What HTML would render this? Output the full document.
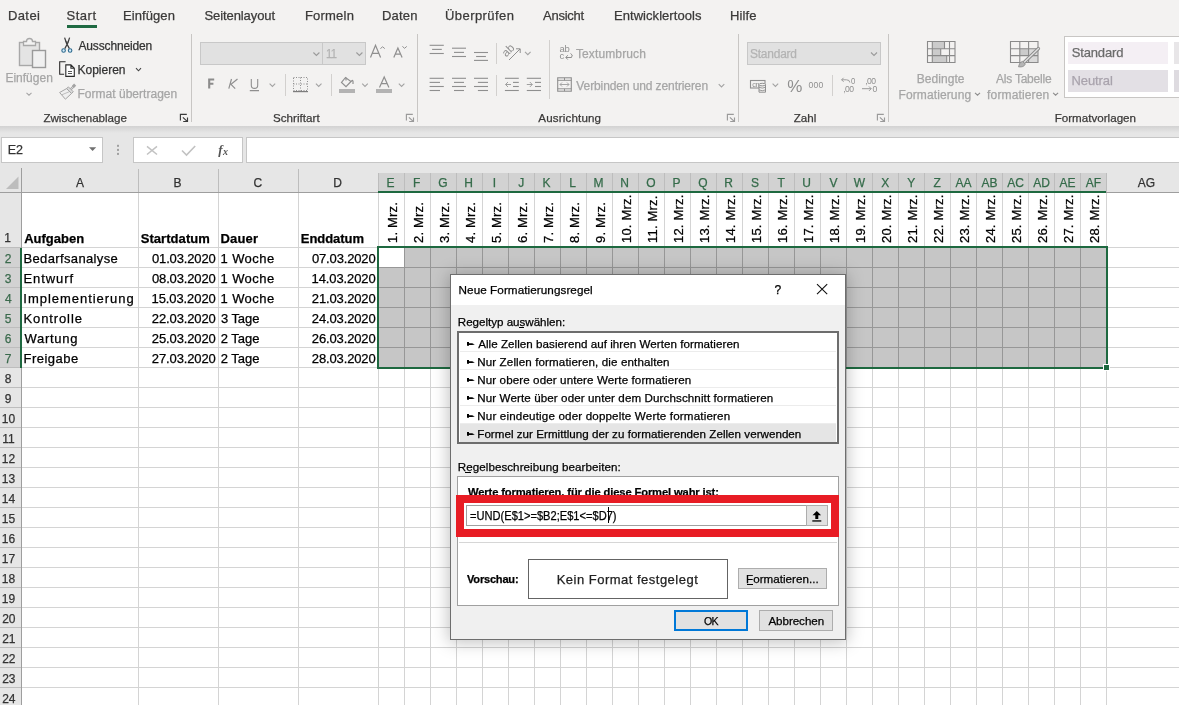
<!DOCTYPE html><html><head><meta charset="utf-8"><style>
html,body{margin:0;padding:0}
body{width:1179px;height:705px;overflow:hidden;position:relative;background:#fff;font-family:"Liberation Sans",sans-serif}
.t{position:absolute;white-space:pre;-webkit-text-stroke:0.25px currentColor}
#wrap{position:absolute;left:0;top:0;width:1179px;height:705px;will-change:transform}
</style></head><body><div id="wrap">
<div style="position:absolute;left:0px;top:0px;width:1179px;height:126px;background:#f3f2f1"></div>
<div style="position:absolute;left:0px;top:128px;width:1179px;height:40px;background:#e6e6e6"></div>
<div style="position:absolute;left:0px;top:126px;width:1179px;height:7px;background:linear-gradient(#d2d2d2,#e6e6e6)"></div>
<div class="t " style="left:7.96px;top:8.70px;font-size:13px;line-height:13px;color:#3b3a39;letter-spacing:0.399px;">Datei</div>
<div class="t " style="left:66.42px;top:8.70px;font-size:13px;line-height:13px;color:#3b3a39;letter-spacing:0.555px;">Start</div>
<div class="t " style="left:122.96px;top:8.70px;font-size:13px;line-height:13px;color:#3b3a39;letter-spacing:0.086px;">Einfügen</div>
<div class="t " style="left:204.41px;top:8.70px;font-size:13px;line-height:13px;color:#3b3a39;letter-spacing:-0.077px;">Seitenlayout</div>
<div class="t " style="left:304.96px;top:8.70px;font-size:13px;line-height:13px;color:#3b3a39;letter-spacing:0.207px;">Formeln</div>
<div class="t " style="left:381.96px;top:8.70px;font-size:13px;line-height:13px;color:#3b3a39;letter-spacing:0.185px;">Daten</div>
<div class="t " style="left:445.02px;top:8.70px;font-size:13px;line-height:13px;color:#3b3a39;letter-spacing:0.424px;">Überprüfen</div>
<div class="t " style="left:543.00px;top:8.70px;font-size:13px;line-height:13px;color:#3b3a39;letter-spacing:-0.252px;">Ansicht</div>
<div class="t " style="left:613.96px;top:8.70px;font-size:13px;line-height:13px;color:#3b3a39;letter-spacing:0.056px;">Entwicklertools</div>
<div class="t " style="left:729.96px;top:8.70px;font-size:13px;line-height:13px;color:#3b3a39;letter-spacing:0.156px;">Hilfe</div>
<div style="position:absolute;left:67px;top:25px;width:30px;height:3px;background:#1f6a42"></div>
<div class="t " style="left:43.45px;top:112.08px;font-size:11.6px;line-height:11.6px;color:#3b3a39;letter-spacing:-0.026px;">Zwischenablage</div>
<div class="t " style="left:272.98px;top:112.08px;font-size:11.6px;line-height:11.6px;color:#3b3a39;letter-spacing:0.042px;">Schriftart</div>
<div class="t " style="left:538.30px;top:112.08px;font-size:11.6px;line-height:11.6px;color:#3b3a39;letter-spacing:0.151px;">Ausrichtung</div>
<div class="t " style="left:793.65px;top:112.08px;font-size:11.6px;line-height:11.6px;color:#3b3a39;letter-spacing:0.047px;">Zahl</div>
<div class="t " style="left:1054.67px;top:112.08px;font-size:11.6px;line-height:11.6px;color:#3b3a39;letter-spacing:0.014px;">Formatvorlagen</div>
<div style="position:absolute;left:191px;top:34px;width:1px;height:88px;background:#c8c6c4"></div>
<div style="position:absolute;left:417px;top:34px;width:1px;height:88px;background:#c8c6c4"></div>
<div style="position:absolute;left:738px;top:34px;width:1px;height:88px;background:#c8c6c4"></div>
<div style="position:absolute;left:888px;top:34px;width:1px;height:88px;background:#c8c6c4"></div>
<div style="position:absolute;left:549px;top:40px;width:1px;height:59px;background:#d2d0ce"></div>
<div class="t " style="left:5.44px;top:72.44px;font-size:12px;line-height:12px;color:#a6a6a6;letter-spacing:0.000px;">Einfügen</div>
<div class="t " style="left:78.40px;top:40.24px;font-size:12px;line-height:12px;color:#333;letter-spacing:-0.135px;">Ausschneiden</div>
<div class="t " style="left:77.44px;top:64.04px;font-size:12px;line-height:12px;color:#333;letter-spacing:0.006px;">Kopieren</div>
<div class="t " style="left:77.44px;top:87.74px;font-size:12px;line-height:12px;color:#a6a6a6;letter-spacing:0.024px;">Format übertragen</div>
<div style="position:absolute;left:200px;top:42px;width:166px;height:23px;background:#e1e1e1;border:1px solid #c8c8c8;box-sizing:border-box"></div>
<div style="position:absolute;left:322px;top:42px;width:1px;height:23px;background:#c8c8c8"></div>
<div class="t " style="left:325.86px;top:47.92px;font-size:12.5px;line-height:12.5px;color:#b3b3b3;letter-spacing:-0.818px;transform-origin:0 0;transform:scaleX(0.8946);">11</div>
<div class="t " style="left:575.96px;top:47.84px;font-size:12px;line-height:12px;color:#a6a6a6;letter-spacing:0.122px;">Textumbruch</div>
<div class="t " style="left:576.34px;top:79.54px;font-size:12px;line-height:12px;color:#a6a6a6;letter-spacing:-0.103px;">Verbinden und zentrieren</div>
<div style="position:absolute;left:747px;top:42px;width:134px;height:23px;background:#e1e1e1;border:1px solid #c8c8c8;box-sizing:border-box"></div>
<div class="t " style="left:750.06px;top:47.72px;font-size:12.5px;line-height:12.5px;color:#b3b3b3;letter-spacing:-0.215px;transform-origin:0 0;transform:scaleX(0.9547);">Standard</div>
<div class="t " style="left:916.64px;top:72.54px;font-size:12px;line-height:12px;color:#a6a6a6;letter-spacing:0.066px;">Bedingte</div>
<div class="t " style="left:898.54px;top:88.54px;font-size:12px;line-height:12px;color:#a6a6a6;letter-spacing:0.109px;">Formatierung</div>
<div class="t " style="left:996.00px;top:72.54px;font-size:12px;line-height:12px;color:#a6a6a6;letter-spacing:-0.224px;">Als Tabelle</div>
<div class="t " style="left:987.12px;top:88.54px;font-size:12px;line-height:12px;color:#a6a6a6;letter-spacing:0.140px;">formatieren</div>
<div style="position:absolute;left:1064px;top:36px;width:120px;height:62px;background:#fff;border:1px solid #c8c6c4;box-sizing:border-box"></div>
<div style="position:absolute;left:1068px;top:42px;width:100px;height:22px;background:#f4eff4"></div>
<div style="position:absolute;left:1068px;top:70px;width:100px;height:22px;background:#e3e0e5"></div>
<div style="position:absolute;left:1174px;top:42px;width:10px;height:22px;background:#e8e6e8"></div>
<div style="position:absolute;left:1174px;top:70px;width:10px;height:22px;background:#dedbe0"></div>
<div class="t " style="left:1071.71px;top:46.00px;font-size:13px;line-height:13px;color:#6b6b6b;letter-spacing:-0.150px;">Standard</div>
<div class="t " style="left:1071.46px;top:73.60px;font-size:13px;line-height:13px;color:#a9a3ad;letter-spacing:-0.079px;">Neutral</div>
<div style="position:absolute;left:285px;top:74px;width:1px;height:22px;background:#d2d0ce"></div>
<div style="position:absolute;left:331px;top:74px;width:1px;height:22px;background:#d2d0ce"></div>
<div style="position:absolute;left:339px;top:88.5px;width:16px;height:4px;background:#b3b3b3"></div>
<div style="position:absolute;left:376px;top:88.5px;width:16px;height:4px;background:#b3b3b3"></div>
<div style="position:absolute;left:496px;top:43px;width:1px;height:21px;background:#d2d0ce"></div>
<div style="position:absolute;left:496px;top:75px;width:1px;height:21px;background:#d2d0ce"></div>
<div style="position:absolute;left:832px;top:75px;width:1px;height:21px;background:#d2d0ce"></div>
<svg style="position:absolute;left:0;top:0" width="1179" height="130"><rect x="19.5" y="42.5" width="20" height="23" fill="#e4e4e4" stroke="#a8a8a8" stroke-width="1.4"/><path d="M23.5,41.5 h3 a3,3 0 0 1 6,0 h3 v4 h-12 z" fill="#f2f2f2" stroke="#a8a8a8" stroke-width="1.3"/><rect x="32.5" y="50.5" width="13" height="17" fill="#f0f0f0" stroke="#9a9a9a" stroke-width="1.4"/><polyline points="26.5,92.8 29.0,95.2 31.5,92.8" fill="none" stroke="#a6a6a6" stroke-width="1.1"/><path d="M64.6,37.6 L66.4,43 L69.4,48.6 M69.6,37.6 L67.8,43 L64.8,48.6" stroke="#3f3f3f" stroke-width="1.25" fill="none"/><path d="M65.6,40.5 L67.2,44.2 L68.6,40.5" stroke="#3f3f3f" stroke-width="1" fill="none"/><circle cx="63.6" cy="50.5" r="1.75" fill="#d6eefb" stroke="#2f6b8f" stroke-width="1.15"/><circle cx="70.1" cy="50.5" r="1.75" fill="#d6eefb" stroke="#2f6b8f" stroke-width="1.15"/><path d="M65.6,61.7 h-5.9 v12.6 h4.4" fill="none" stroke="#2a2a2a" stroke-width="1.1"/><path d="M65.8,64.9 h5.1 l3.4,3.4 v8.1 h-8.5 z M70.9,64.9 v3.4 h3.4" fill="#fff" stroke="#2a2a2a" stroke-width="1.1"/><path d="M68,71.5 h4 M68,73.5 h4" stroke="#444" stroke-width="0.9"/><polyline points="136.0,68.2 138.5,70.8 141.0,68.2" fill="none" stroke="#444" stroke-width="1.1"/><path d="M66.6,88.6 L59.6,92.5 L65.4,99.2 L71.6,93.4 Z" fill="#efefef" stroke="#a3a3a3" stroke-width="1"/><path d="M61.8,94.8 L69.8,91.5" stroke="#b8b8b8" stroke-width="0.9"/><path d="M66.6,88.6 L68.4,86.9 L73.3,91.8 L71.6,93.4 Z" fill="#dcdcdc" stroke="#a3a3a3" stroke-width="1"/><path d="M70.8,89.2 L73.6,86.4" stroke="#a3a3a3" stroke-width="2.2"/><path d="M70.8,89.2 L73.2,86.8" stroke="#e8e8e8" stroke-width="0.7"/><rect x="72.6" y="84.2" width="3" height="3" fill="#a3a3a3" transform="rotate(45 74.1 85.7)"/><path d="M180.4,120.5 V114.3 H186.8 M182.9,117.3 L187.2,121.4 M187.5,117.5 V121.5 H183.2" fill="none" stroke="#3a3a3a" stroke-width="1.15"/><polyline points="313.4,52.5 316.4,55.5 319.4,52.5" fill="none" stroke="#9a9a9a" stroke-width="1.1"/><polyline points="356.4,52.5 359.4,55.5 362.4,52.5" fill="none" stroke="#9a9a9a" stroke-width="1.1"/><path d="M370.5,57.6 L375.5,45.3 L380.6,57.6 M372.3,53.3 H378.8" fill="none" stroke="#8f8f8f" stroke-width="1.2"/><polyline points="380.4,48.6 382.6,46.8 384.8,48.6" fill="none" stroke="#8f8f8f" stroke-width="1"/><path d="M393.8,57.6 L397.9,48 L402.1,57.6 M395.3,54.2 H400.6" fill="none" stroke="#8f8f8f" stroke-width="1.2"/><polyline points="402.4,46.4 404.6,48.3 406.8,46.4" fill="none" stroke="#8f8f8f" stroke-width="1"/><path d="M209.2,88.6 V79.5 H214.2 M209.2,83.8 H213.4" fill="none" stroke="#8c8c8c" stroke-width="2.1"/><path d="M231.5,79 L228.8,88.6 M237.5,79 L231,84.3 L235.2,88.6" fill="none" stroke="#8f8f8f" stroke-width="1.2"/><path d="M251.3,79 V85.2 a3.2,3.2 0 0 0 6.4,0 V79 M249.8,90.6 H259" fill="none" stroke="#8f8f8f" stroke-width="1.1"/><polyline points="269.6,83.6 272.4,86.4 275.2,83.6" fill="none" stroke="#a3a3a3" stroke-width="1.1"/><rect x="293.5" y="77.5" width="14" height="13" fill="none" stroke="#8f8f8f" stroke-width="1" stroke-dasharray="1,1.5"/><path d="M300.5,77.5 V90.5 M293.5,84 H307.5" fill="none" stroke="#8f8f8f" stroke-width="1" stroke-dasharray="1,1.5"/><path d="M293,91.6 H308" stroke="#7d7d7d" stroke-width="1.2"/><polyline points="315.9,83.6 318.7,86.4 321.5,83.6" fill="none" stroke="#a3a3a3" stroke-width="1.1"/><path d="M345.5,77.5 L341.5,82.5 L346,86.7 L351,81.5 Z" fill="none" stroke="#8f8f8f" stroke-width="1.2"/><path d="M346,77.5 v3 M351,81.5 q2.5,-3 2,2.5" fill="none" stroke="#8f8f8f" stroke-width="1.2"/><polyline points="362.2,83.6 365.0,86.4 367.8,83.6" fill="none" stroke="#a3a3a3" stroke-width="1.1"/><path d="M379.5,87.4 L384.2,77 L388.9,87.4 M381.3,83.6 H387.1" fill="none" stroke="#8f8f8f" stroke-width="1.2"/><polyline points="398.8,83.6 401.6,86.4 404.4,83.6" fill="none" stroke="#a3a3a3" stroke-width="1.1"/><path d="M406.4,120.5 V114.3 H412.8 M408.9,117.3 L413.2,121.4 M413.5,117.5 V121.5 H409.2" fill="none" stroke="#9a9a9a" stroke-width="1.15"/><path d="M429.6,45.3 H443.8" stroke="#8f8f8f" stroke-width="1.1"/><path d="M429.6,53.5 H443.8" stroke="#8f8f8f" stroke-width="1.1"/><path d="M432.1,49.4 H441.8" stroke="#8f8f8f" stroke-width="1.1"/><path d="M452.0,48.2 H466.0" stroke="#8f8f8f" stroke-width="1.1"/><path d="M452.0,56.5 H466.0" stroke="#8f8f8f" stroke-width="1.1"/><path d="M454.0,52.4 H464.0" stroke="#8f8f8f" stroke-width="1.1"/><path d="M474.0,52.5 H488.0" stroke="#8f8f8f" stroke-width="1.1"/><path d="M474.0,60.4 H488.0" stroke="#8f8f8f" stroke-width="1.1"/><path d="M476.1,56.5 H485.9" stroke="#8f8f8f" stroke-width="1.1"/><text x="0" y="0" transform="translate(506.3,57.6) rotate(-45)" font-family="Liberation Sans" font-size="11.5" fill="#8f8f8f">ab</text><path d="M509,60 L520,49 M516,48.8 H520.2 V53" fill="none" stroke="#8f8f8f" stroke-width="1"/><polyline points="525.0,51.9 527.8,54.7 530.6,51.9" fill="none" stroke="#a3a3a3" stroke-width="1.1"/><path d="M429.6,78.3 H443.8" stroke="#8f8f8f" stroke-width="1.1"/><path d="M452.0,78.3 H466.0" stroke="#8f8f8f" stroke-width="1.1"/><path d="M474.0,78.3 H488.0" stroke="#8f8f8f" stroke-width="1.1"/><path d="M429.6,86.5 H443.8" stroke="#8f8f8f" stroke-width="1.1"/><path d="M452.0,86.5 H466.0" stroke="#8f8f8f" stroke-width="1.1"/><path d="M474.0,86.5 H488.0" stroke="#8f8f8f" stroke-width="1.1"/><path d="M429.6,82.4 H440.0" stroke="#8f8f8f" stroke-width="1.1"/><path d="M454.0,82.4 H464.0" stroke="#8f8f8f" stroke-width="1.1"/><path d="M477.9,82.4 H488.0" stroke="#8f8f8f" stroke-width="1.1"/><path d="M429.6,90.5 H440.0" stroke="#8f8f8f" stroke-width="1.1"/><path d="M454.0,90.5 H464.0" stroke="#8f8f8f" stroke-width="1.1"/><path d="M477.9,90.5 H488.0" stroke="#8f8f8f" stroke-width="1.1"/><path d="M504.9,78.3 H518.8" stroke="#8f8f8f" stroke-width="1.1"/><path d="M504.9,90.5 H518.8" stroke="#8f8f8f" stroke-width="1.1"/><path d="M513.0,82.4 H518.8" stroke="#8f8f8f" stroke-width="1.1"/><path d="M513.0,86.5 H518.8" stroke="#8f8f8f" stroke-width="1.1"/><path d="M511,84.5 H505.5 M508,82 L505.5,84.5 L508,87" fill="none" stroke="#a0a0a0" stroke-width="1"/><path d="M526.8,78.3 H541.0" stroke="#8f8f8f" stroke-width="1.1"/><path d="M526.8,90.5 H541.0" stroke="#8f8f8f" stroke-width="1.1"/><path d="M535.0,82.4 H541.0" stroke="#8f8f8f" stroke-width="1.1"/><path d="M535.0,86.5 H541.0" stroke="#8f8f8f" stroke-width="1.1"/><path d="M526.8,84.5 H532.3 M529.8,82 L532.3,84.5 L529.8,87" fill="none" stroke="#a0a0a0" stroke-width="1"/><text x="559.6" y="52.2" font-family="Liberation Sans" font-size="9.5" fill="#8f8f8f" letter-spacing="-0.3">ab</text><text x="559.6" y="59.4" font-family="Liberation Sans" font-size="9.5" fill="#8f8f8f">c</text><path d="M570.5,53.5 q3,1 1,4 h-5.5 M567.8,55.2 L565.8,57.5 L567.8,59.6" fill="none" stroke="#8f8f8f" stroke-width="1"/><rect x="557.7" y="77.8" width="13.6" height="13.4" fill="none" stroke="#8f8f8f" stroke-width="1.1"/><path d="M557.7,80.3 H571.3 M557.7,88.8 H571.3 M564.5,77.8 V80.3 M564.5,88.8 V91.2" fill="none" stroke="#8f8f8f" stroke-width="1"/><path d="M560,84.5 H569 M562,82.5 L560,84.5 L562,86.5 M567,82.5 L569,84.5 L567,86.5" fill="none" stroke="#a6a6a6" stroke-width="1"/><polyline points="718.7,84.1 721.5,86.9 724.3,84.1" fill="none" stroke="#a3a3a3" stroke-width="1.1"/><path d="M727.4,120.5 V114.3 H733.8 M729.9,117.3 L734.2,121.4 M734.5,117.5 V121.5 H730.2" fill="none" stroke="#9a9a9a" stroke-width="1.15"/><polyline points="871.0,52.5 874.0,55.5 877.0,52.5" fill="none" stroke="#9a9a9a" stroke-width="1.1"/><rect x="750.5" y="80.5" width="14.5" height="7.5" fill="none" stroke="#8f8f8f" stroke-width="1.1"/><text x="752.3" y="86.9" font-family="Liberation Sans" font-size="7.5" fill="#8f8f8f" letter-spacing="-0.5">cn</text><path d="M759,84.6 h6.5 v7.6 h-6.5 z" fill="#f3f2f1" stroke="#8f8f8f" stroke-width="1"/><ellipse cx="762.25" cy="84.6" rx="3.25" ry="1.3" fill="#f3f2f1" stroke="#8f8f8f" stroke-width="1"/><path d="M759,87.3 q3.25,1.6 6.5,0 M759,89.9 q3.25,1.6 6.5,0" fill="none" stroke="#8f8f8f" stroke-width="0.9"/><polyline points="772.6,83.6 775.4,86.4 778.2,83.6" fill="none" stroke="#a3a3a3" stroke-width="1.1"/><text x="787.3" y="91.7" font-family="Liberation Sans" font-size="17" fill="#8f8f8f">%</text><text x="808.6" y="87.9" font-family="Liberation Sans" font-size="8.6" fill="#8f8f8f" letter-spacing="0.2">000</text><text x="851" y="84.2" font-family="Liberation Sans" font-size="8.6" fill="#8f8f8f" transform="translate(851,84.2) scale(0.9,1) translate(-851,-84.2)">0</text><text x="843.2" y="91.8" font-family="Liberation Sans" font-size="8.6" fill="#8f8f8f" letter-spacing="-0.6">,00</text><path d="M849.8,82.5 Q849.8,79.8 846.5,79.8 H841.6 M843.6,77.8 L841.6,79.8 L843.6,81.8" fill="none" stroke="#9a9a9a" stroke-width="1"/><text x="865.2" y="84.2" font-family="Liberation Sans" font-size="8.6" fill="#8f8f8f" letter-spacing="-0.6">,00</text><text x="872.5" y="91.8" font-family="Liberation Sans" font-size="8.6" fill="#8f8f8f">0</text><path d="M862,88.7 H871.2 M869,86.5 L871.2,88.7 L869,90.9" fill="none" stroke="#9a9a9a" stroke-width="1"/><path d="M877.4,120.5 V114.3 H883.8 M879.9,117.3 L884.2,121.4 M884.5,117.5 V121.5 H880.2" fill="none" stroke="#9a9a9a" stroke-width="1.15"/><rect x="932.3" y="41.5" width="12.2" height="7.2" fill="#cbcbcb"/><rect x="932.3" y="48.7" width="8.4" height="6.9" fill="#cbcbcb"/><rect x="932.3" y="55.6" width="14.4" height="6.9" fill="#cbcbcb"/><path d="M927.5,41.5 H955 V62.5 H927.5 Z M927.5,48.7 H955 M927.5,55.6 H955 M932.3,41.5 V62.5 M949.5,41.5 V62.5 M944.5,41.5 V48.7 M940.7,48.7 V55.6 M946.7,55.6 V62.5" fill="none" stroke="#8a8a8a" stroke-width="1.1"/><polyline points="975.0,92.8 977.5,95.2 980.0,92.8" fill="none" stroke="#8d8d8d" stroke-width="1.1"/><rect x="1019.8" y="48.7" width="8.8" height="6.9" fill="#cbcbcb"/><rect x="1028.6" y="48.7" width="9.4" height="13.8" fill="#dadada"/><path d="M1010.5,41.5 H1038 V62.5 H1010.5 Z M1010.5,48.7 H1038 M1010.5,55.6 H1038 M1019.8,41.5 V62.5 M1028.6,41.5 V62.5" fill="none" stroke="#8a8a8a" stroke-width="1.1"/><path d="M1038.5,48.5 L1024.5,62" stroke="#8a8a8a" stroke-width="3.2" stroke-linecap="round"/><path d="M1038.5,48.5 L1024.5,62" stroke="#e0e0e0" stroke-width="1.4" stroke-linecap="round"/><path d="M1018.5,66.8 q0.5,-4.5 4,-5.5 l2.8,2.8 q-1.5,3.5 -6.8,2.7 z" fill="#b5b5b5" stroke="#8a8a8a" stroke-width="0.8"/><polyline points="1053.1,92.8 1055.6,95.2 1058.1,92.8" fill="none" stroke="#8d8d8d" stroke-width="1.1"/></svg>
<div style="position:absolute;left:1px;top:137px;width:102px;height:26px;background:#fff;border:1px solid #c6c6c6;box-sizing:border-box"></div>
<div class="t " style="left:7.70px;top:144.32px;font-size:12.5px;line-height:12.5px;color:#333;">E2</div>
<div style="position:absolute;left:133px;top:137px;width:110px;height:26px;background:#fff;border:1px solid #c6c6c6;box-sizing:border-box"></div>
<div style="position:absolute;left:246px;top:137px;width:933px;height:26px;background:#fff;border:1px solid #c6c6c6;border-right:none;box-sizing:border-box"></div>
<div style="position:absolute;left:21px;top:193px;width:1158px;height:512px;background:#fff"></div>
<div style="position:absolute;left:0px;top:163px;width:1179px;height:30px;background:#e6e6e6"></div>
<div style="position:absolute;left:0px;top:193px;width:21px;height:512px;background:#e6e6e6"></div>
<div style="position:absolute;left:378px;top:173px;width:728px;height:19px;background:#d2d2d2"></div>
<div style="position:absolute;left:0px;top:248px;width:20px;height:120px;background:#d2d2d2"></div>
<div style="position:absolute;left:378px;top:247px;width:728px;height:121px;background:#c6c6c6"></div>
<div style="position:absolute;left:379px;top:248px;width:25px;height:19px;background:#fff"></div>
<div style="position:absolute;left:138px;top:193px;width:1px;height:512px;background:#d4d4d4"></div>
<div style="position:absolute;left:138px;top:169px;width:1px;height:23px;background:#bdbdbd"></div>
<div style="position:absolute;left:218px;top:193px;width:1px;height:512px;background:#d4d4d4"></div>
<div style="position:absolute;left:218px;top:169px;width:1px;height:23px;background:#bdbdbd"></div>
<div style="position:absolute;left:298px;top:193px;width:1px;height:512px;background:#d4d4d4"></div>
<div style="position:absolute;left:298px;top:169px;width:1px;height:23px;background:#bdbdbd"></div>
<div style="position:absolute;left:378px;top:193px;width:1px;height:512px;background:#d4d4d4"></div>
<div style="position:absolute;left:378px;top:173px;width:1px;height:20px;background:#bdbdbd"></div>
<div style="position:absolute;left:404px;top:193px;width:1px;height:512px;background:#d4d4d4"></div>
<div style="position:absolute;left:404px;top:173px;width:1px;height:20px;background:#bdbdbd"></div>
<div style="position:absolute;left:430px;top:193px;width:1px;height:512px;background:#d4d4d4"></div>
<div style="position:absolute;left:430px;top:173px;width:1px;height:20px;background:#bdbdbd"></div>
<div style="position:absolute;left:456px;top:193px;width:1px;height:512px;background:#d4d4d4"></div>
<div style="position:absolute;left:456px;top:173px;width:1px;height:20px;background:#bdbdbd"></div>
<div style="position:absolute;left:482px;top:193px;width:1px;height:512px;background:#d4d4d4"></div>
<div style="position:absolute;left:482px;top:173px;width:1px;height:20px;background:#bdbdbd"></div>
<div style="position:absolute;left:508px;top:193px;width:1px;height:512px;background:#d4d4d4"></div>
<div style="position:absolute;left:508px;top:173px;width:1px;height:20px;background:#bdbdbd"></div>
<div style="position:absolute;left:534px;top:193px;width:1px;height:512px;background:#d4d4d4"></div>
<div style="position:absolute;left:534px;top:173px;width:1px;height:20px;background:#bdbdbd"></div>
<div style="position:absolute;left:560px;top:193px;width:1px;height:512px;background:#d4d4d4"></div>
<div style="position:absolute;left:560px;top:173px;width:1px;height:20px;background:#bdbdbd"></div>
<div style="position:absolute;left:586px;top:193px;width:1px;height:512px;background:#d4d4d4"></div>
<div style="position:absolute;left:586px;top:173px;width:1px;height:20px;background:#bdbdbd"></div>
<div style="position:absolute;left:612px;top:193px;width:1px;height:512px;background:#d4d4d4"></div>
<div style="position:absolute;left:612px;top:173px;width:1px;height:20px;background:#bdbdbd"></div>
<div style="position:absolute;left:638px;top:193px;width:1px;height:512px;background:#d4d4d4"></div>
<div style="position:absolute;left:638px;top:173px;width:1px;height:20px;background:#bdbdbd"></div>
<div style="position:absolute;left:664px;top:193px;width:1px;height:512px;background:#d4d4d4"></div>
<div style="position:absolute;left:664px;top:173px;width:1px;height:20px;background:#bdbdbd"></div>
<div style="position:absolute;left:690px;top:193px;width:1px;height:512px;background:#d4d4d4"></div>
<div style="position:absolute;left:690px;top:173px;width:1px;height:20px;background:#bdbdbd"></div>
<div style="position:absolute;left:716px;top:193px;width:1px;height:512px;background:#d4d4d4"></div>
<div style="position:absolute;left:716px;top:173px;width:1px;height:20px;background:#bdbdbd"></div>
<div style="position:absolute;left:742px;top:193px;width:1px;height:512px;background:#d4d4d4"></div>
<div style="position:absolute;left:742px;top:173px;width:1px;height:20px;background:#bdbdbd"></div>
<div style="position:absolute;left:768px;top:193px;width:1px;height:512px;background:#d4d4d4"></div>
<div style="position:absolute;left:768px;top:173px;width:1px;height:20px;background:#bdbdbd"></div>
<div style="position:absolute;left:794px;top:193px;width:1px;height:512px;background:#d4d4d4"></div>
<div style="position:absolute;left:794px;top:173px;width:1px;height:20px;background:#bdbdbd"></div>
<div style="position:absolute;left:820px;top:193px;width:1px;height:512px;background:#d4d4d4"></div>
<div style="position:absolute;left:820px;top:173px;width:1px;height:20px;background:#bdbdbd"></div>
<div style="position:absolute;left:846px;top:193px;width:1px;height:512px;background:#d4d4d4"></div>
<div style="position:absolute;left:846px;top:173px;width:1px;height:20px;background:#bdbdbd"></div>
<div style="position:absolute;left:872px;top:193px;width:1px;height:512px;background:#d4d4d4"></div>
<div style="position:absolute;left:872px;top:173px;width:1px;height:20px;background:#bdbdbd"></div>
<div style="position:absolute;left:898px;top:193px;width:1px;height:512px;background:#d4d4d4"></div>
<div style="position:absolute;left:898px;top:173px;width:1px;height:20px;background:#bdbdbd"></div>
<div style="position:absolute;left:924px;top:193px;width:1px;height:512px;background:#d4d4d4"></div>
<div style="position:absolute;left:924px;top:173px;width:1px;height:20px;background:#bdbdbd"></div>
<div style="position:absolute;left:950px;top:193px;width:1px;height:512px;background:#d4d4d4"></div>
<div style="position:absolute;left:950px;top:173px;width:1px;height:20px;background:#bdbdbd"></div>
<div style="position:absolute;left:976px;top:193px;width:1px;height:512px;background:#d4d4d4"></div>
<div style="position:absolute;left:976px;top:173px;width:1px;height:20px;background:#bdbdbd"></div>
<div style="position:absolute;left:1002px;top:193px;width:1px;height:512px;background:#d4d4d4"></div>
<div style="position:absolute;left:1002px;top:173px;width:1px;height:20px;background:#bdbdbd"></div>
<div style="position:absolute;left:1028px;top:193px;width:1px;height:512px;background:#d4d4d4"></div>
<div style="position:absolute;left:1028px;top:173px;width:1px;height:20px;background:#bdbdbd"></div>
<div style="position:absolute;left:1054px;top:193px;width:1px;height:512px;background:#d4d4d4"></div>
<div style="position:absolute;left:1054px;top:173px;width:1px;height:20px;background:#bdbdbd"></div>
<div style="position:absolute;left:1080px;top:193px;width:1px;height:512px;background:#d4d4d4"></div>
<div style="position:absolute;left:1080px;top:173px;width:1px;height:20px;background:#bdbdbd"></div>
<div style="position:absolute;left:1106px;top:193px;width:1px;height:512px;background:#d4d4d4"></div>
<div style="position:absolute;left:1106px;top:173px;width:1px;height:20px;background:#bdbdbd"></div>
<div style="position:absolute;left:21px;top:247px;width:1158px;height:1px;background:#d4d4d4"></div>
<div style="position:absolute;left:0px;top:247px;width:21px;height:1px;background:#bdbdbd"></div>
<div style="position:absolute;left:21px;top:267px;width:1158px;height:1px;background:#d4d4d4"></div>
<div style="position:absolute;left:0px;top:267px;width:21px;height:1px;background:#bdbdbd"></div>
<div style="position:absolute;left:21px;top:287px;width:1158px;height:1px;background:#d4d4d4"></div>
<div style="position:absolute;left:0px;top:287px;width:21px;height:1px;background:#bdbdbd"></div>
<div style="position:absolute;left:21px;top:307px;width:1158px;height:1px;background:#d4d4d4"></div>
<div style="position:absolute;left:0px;top:307px;width:21px;height:1px;background:#bdbdbd"></div>
<div style="position:absolute;left:21px;top:327px;width:1158px;height:1px;background:#d4d4d4"></div>
<div style="position:absolute;left:0px;top:327px;width:21px;height:1px;background:#bdbdbd"></div>
<div style="position:absolute;left:21px;top:347px;width:1158px;height:1px;background:#d4d4d4"></div>
<div style="position:absolute;left:0px;top:347px;width:21px;height:1px;background:#bdbdbd"></div>
<div style="position:absolute;left:21px;top:367px;width:1158px;height:1px;background:#d4d4d4"></div>
<div style="position:absolute;left:0px;top:367px;width:21px;height:1px;background:#bdbdbd"></div>
<div style="position:absolute;left:21px;top:387px;width:1158px;height:1px;background:#d4d4d4"></div>
<div style="position:absolute;left:0px;top:387px;width:21px;height:1px;background:#bdbdbd"></div>
<div style="position:absolute;left:21px;top:407px;width:1158px;height:1px;background:#d4d4d4"></div>
<div style="position:absolute;left:0px;top:407px;width:21px;height:1px;background:#bdbdbd"></div>
<div style="position:absolute;left:21px;top:427px;width:1158px;height:1px;background:#d4d4d4"></div>
<div style="position:absolute;left:0px;top:427px;width:21px;height:1px;background:#bdbdbd"></div>
<div style="position:absolute;left:21px;top:447px;width:1158px;height:1px;background:#d4d4d4"></div>
<div style="position:absolute;left:0px;top:447px;width:21px;height:1px;background:#bdbdbd"></div>
<div style="position:absolute;left:21px;top:467px;width:1158px;height:1px;background:#d4d4d4"></div>
<div style="position:absolute;left:0px;top:467px;width:21px;height:1px;background:#bdbdbd"></div>
<div style="position:absolute;left:21px;top:487px;width:1158px;height:1px;background:#d4d4d4"></div>
<div style="position:absolute;left:0px;top:487px;width:21px;height:1px;background:#bdbdbd"></div>
<div style="position:absolute;left:21px;top:507px;width:1158px;height:1px;background:#d4d4d4"></div>
<div style="position:absolute;left:0px;top:507px;width:21px;height:1px;background:#bdbdbd"></div>
<div style="position:absolute;left:21px;top:527px;width:1158px;height:1px;background:#d4d4d4"></div>
<div style="position:absolute;left:0px;top:527px;width:21px;height:1px;background:#bdbdbd"></div>
<div style="position:absolute;left:21px;top:547px;width:1158px;height:1px;background:#d4d4d4"></div>
<div style="position:absolute;left:0px;top:547px;width:21px;height:1px;background:#bdbdbd"></div>
<div style="position:absolute;left:21px;top:567px;width:1158px;height:1px;background:#d4d4d4"></div>
<div style="position:absolute;left:0px;top:567px;width:21px;height:1px;background:#bdbdbd"></div>
<div style="position:absolute;left:21px;top:587px;width:1158px;height:1px;background:#d4d4d4"></div>
<div style="position:absolute;left:0px;top:587px;width:21px;height:1px;background:#bdbdbd"></div>
<div style="position:absolute;left:21px;top:607px;width:1158px;height:1px;background:#d4d4d4"></div>
<div style="position:absolute;left:0px;top:607px;width:21px;height:1px;background:#bdbdbd"></div>
<div style="position:absolute;left:21px;top:627px;width:1158px;height:1px;background:#d4d4d4"></div>
<div style="position:absolute;left:0px;top:627px;width:21px;height:1px;background:#bdbdbd"></div>
<div style="position:absolute;left:21px;top:647px;width:1158px;height:1px;background:#d4d4d4"></div>
<div style="position:absolute;left:0px;top:647px;width:21px;height:1px;background:#bdbdbd"></div>
<div style="position:absolute;left:21px;top:667px;width:1158px;height:1px;background:#d4d4d4"></div>
<div style="position:absolute;left:0px;top:667px;width:21px;height:1px;background:#bdbdbd"></div>
<div style="position:absolute;left:21px;top:687px;width:1158px;height:1px;background:#d4d4d4"></div>
<div style="position:absolute;left:0px;top:687px;width:21px;height:1px;background:#bdbdbd"></div>
<div style="position:absolute;left:404px;top:248px;width:1px;height:120px;background:#979797"></div>
<div style="position:absolute;left:430px;top:248px;width:1px;height:120px;background:#979797"></div>
<div style="position:absolute;left:456px;top:248px;width:1px;height:120px;background:#979797"></div>
<div style="position:absolute;left:482px;top:248px;width:1px;height:120px;background:#979797"></div>
<div style="position:absolute;left:508px;top:248px;width:1px;height:120px;background:#979797"></div>
<div style="position:absolute;left:534px;top:248px;width:1px;height:120px;background:#979797"></div>
<div style="position:absolute;left:560px;top:248px;width:1px;height:120px;background:#979797"></div>
<div style="position:absolute;left:586px;top:248px;width:1px;height:120px;background:#979797"></div>
<div style="position:absolute;left:612px;top:248px;width:1px;height:120px;background:#979797"></div>
<div style="position:absolute;left:638px;top:248px;width:1px;height:120px;background:#979797"></div>
<div style="position:absolute;left:664px;top:248px;width:1px;height:120px;background:#979797"></div>
<div style="position:absolute;left:690px;top:248px;width:1px;height:120px;background:#979797"></div>
<div style="position:absolute;left:716px;top:248px;width:1px;height:120px;background:#979797"></div>
<div style="position:absolute;left:742px;top:248px;width:1px;height:120px;background:#979797"></div>
<div style="position:absolute;left:768px;top:248px;width:1px;height:120px;background:#979797"></div>
<div style="position:absolute;left:794px;top:248px;width:1px;height:120px;background:#979797"></div>
<div style="position:absolute;left:820px;top:248px;width:1px;height:120px;background:#979797"></div>
<div style="position:absolute;left:846px;top:248px;width:1px;height:120px;background:#979797"></div>
<div style="position:absolute;left:872px;top:248px;width:1px;height:120px;background:#979797"></div>
<div style="position:absolute;left:898px;top:248px;width:1px;height:120px;background:#979797"></div>
<div style="position:absolute;left:924px;top:248px;width:1px;height:120px;background:#979797"></div>
<div style="position:absolute;left:950px;top:248px;width:1px;height:120px;background:#979797"></div>
<div style="position:absolute;left:976px;top:248px;width:1px;height:120px;background:#979797"></div>
<div style="position:absolute;left:1002px;top:248px;width:1px;height:120px;background:#979797"></div>
<div style="position:absolute;left:1028px;top:248px;width:1px;height:120px;background:#979797"></div>
<div style="position:absolute;left:1054px;top:248px;width:1px;height:120px;background:#979797"></div>
<div style="position:absolute;left:1080px;top:248px;width:1px;height:120px;background:#979797"></div>
<div style="position:absolute;left:379px;top:267px;width:727px;height:1px;background:#979797"></div>
<div style="position:absolute;left:379px;top:287px;width:727px;height:1px;background:#979797"></div>
<div style="position:absolute;left:379px;top:307px;width:727px;height:1px;background:#979797"></div>
<div style="position:absolute;left:379px;top:327px;width:727px;height:1px;background:#979797"></div>
<div style="position:absolute;left:379px;top:347px;width:727px;height:1px;background:#979797"></div>
<div style="position:absolute;left:0px;top:192px;width:1179px;height:1px;background:#9e9e9e"></div>
<div style="position:absolute;left:378px;top:191px;width:728px;height:2px;background:#1e6940"></div>
<div style="position:absolute;left:21px;top:168px;width:1px;height:537px;background:#9e9e9e"></div>
<div style="position:absolute;left:20px;top:248px;width:2px;height:120px;background:#1e6940"></div>
<svg style="position:absolute;left:6px;top:176px" width="13" height="13"><polygon points="12.5,0.5 12.5,13 0,13" fill="#bdbdbd"/></svg>
<div class="t " style="left:76.00px;top:176.84px;font-size:12px;line-height:12px;color:#333;">A</div>
<div class="t " style="left:173.54px;top:176.84px;font-size:12px;line-height:12px;color:#333;">B</div>
<div class="t " style="left:253.57px;top:176.84px;font-size:12px;line-height:12px;color:#333;">C</div>
<div class="t " style="left:333.21px;top:176.84px;font-size:12px;line-height:12px;color:#333;">D</div>
<div class="t " style="left:386.54px;top:176.84px;font-size:12px;line-height:12px;color:#356b4a;">E</div>
<div class="t " style="left:412.88px;top:176.84px;font-size:12px;line-height:12px;color:#356b4a;">F</div>
<div class="t " style="left:438.23px;top:176.84px;font-size:12px;line-height:12px;color:#356b4a;">G</div>
<div class="t " style="left:464.21px;top:176.84px;font-size:12px;line-height:12px;color:#356b4a;">H</div>
<div class="t " style="left:492.75px;top:176.84px;font-size:12px;line-height:12px;color:#356b4a;">I</div>
<div class="t " style="left:518.32px;top:176.84px;font-size:12px;line-height:12px;color:#356b4a;">J</div>
<div class="t " style="left:542.54px;top:176.84px;font-size:12px;line-height:12px;color:#356b4a;">K</div>
<div class="t " style="left:569.20px;top:176.84px;font-size:12px;line-height:12px;color:#356b4a;">L</div>
<div class="t " style="left:593.54px;top:176.84px;font-size:12px;line-height:12px;color:#356b4a;">M</div>
<div class="t " style="left:620.21px;top:176.84px;font-size:12px;line-height:12px;color:#356b4a;">N</div>
<div class="t " style="left:646.29px;top:176.84px;font-size:12px;line-height:12px;color:#356b4a;">O</div>
<div class="t " style="left:672.54px;top:176.84px;font-size:12px;line-height:12px;color:#356b4a;">P</div>
<div class="t " style="left:698.29px;top:176.84px;font-size:12px;line-height:12px;color:#356b4a;">Q</div>
<div class="t " style="left:724.21px;top:176.84px;font-size:12px;line-height:12px;color:#356b4a;">R</div>
<div class="t " style="left:750.96px;top:176.84px;font-size:12px;line-height:12px;color:#356b4a;">S</div>
<div class="t " style="left:777.60px;top:176.84px;font-size:12px;line-height:12px;color:#356b4a;">T</div>
<div class="t " style="left:802.27px;top:176.84px;font-size:12px;line-height:12px;color:#356b4a;">U</div>
<div class="t " style="left:829.44px;top:176.84px;font-size:12px;line-height:12px;color:#356b4a;">V</div>
<div class="t " style="left:853.78px;top:176.84px;font-size:12px;line-height:12px;color:#356b4a;">W</div>
<div class="t " style="left:881.20px;top:176.84px;font-size:12px;line-height:12px;color:#356b4a;">X</div>
<div class="t " style="left:907.20px;top:176.84px;font-size:12px;line-height:12px;color:#356b4a;">Y</div>
<div class="t " style="left:933.48px;top:176.84px;font-size:12px;line-height:12px;color:#356b4a;">Z</div>
<div class="t " style="left:955.50px;top:176.84px;font-size:12px;line-height:12px;color:#356b4a;">AA</div>
<div class="t " style="left:981.50px;top:176.84px;font-size:12px;line-height:12px;color:#356b4a;">AB</div>
<div class="t " style="left:1007.16px;top:176.84px;font-size:12px;line-height:12px;color:#356b4a;">AC</div>
<div class="t " style="left:1033.16px;top:176.84px;font-size:12px;line-height:12px;color:#356b4a;">AD</div>
<div class="t " style="left:1059.50px;top:176.84px;font-size:12px;line-height:12px;color:#356b4a;">AE</div>
<div class="t " style="left:1085.83px;top:176.84px;font-size:12px;line-height:12px;color:#356b4a;">AF</div>
<div class="t " style="left:1137.83px;top:176.84px;font-size:12px;line-height:12px;color:#333;">AG</div>
<div class="t " style="left:4.36px;top:232.34px;font-size:12px;line-height:12px;color:#333;">1</div>
<div class="t " style="left:4.66px;top:252.74px;font-size:12px;line-height:12px;color:#3b6a4d;">2</div>
<div class="t " style="left:4.78px;top:272.74px;font-size:12px;line-height:12px;color:#3b6a4d;">3</div>
<div class="t " style="left:5.02px;top:292.74px;font-size:12px;line-height:12px;color:#3b6a4d;">4</div>
<div class="t " style="left:4.78px;top:312.74px;font-size:12px;line-height:12px;color:#3b6a4d;">5</div>
<div class="t " style="left:4.66px;top:332.74px;font-size:12px;line-height:12px;color:#3b6a4d;">6</div>
<div class="t " style="left:4.66px;top:352.74px;font-size:12px;line-height:12px;color:#3b6a4d;">7</div>
<div class="t " style="left:4.72px;top:372.74px;font-size:12px;line-height:12px;color:#333;">8</div>
<div class="t " style="left:4.72px;top:392.74px;font-size:12px;line-height:12px;color:#333;">9</div>
<div class="t " style="left:1.83px;top:412.74px;font-size:12px;line-height:12px;color:#333;">10</div>
<div class="t " style="left:2.27px;top:432.74px;font-size:12px;line-height:12px;color:#333;">11</div>
<div class="t " style="left:1.83px;top:452.74px;font-size:12px;line-height:12px;color:#333;">12</div>
<div class="t " style="left:1.83px;top:472.74px;font-size:12px;line-height:12px;color:#333;">13</div>
<div class="t " style="left:1.83px;top:492.74px;font-size:12px;line-height:12px;color:#333;">14</div>
<div class="t " style="left:1.83px;top:512.74px;font-size:12px;line-height:12px;color:#333;">15</div>
<div class="t " style="left:1.83px;top:532.74px;font-size:12px;line-height:12px;color:#333;">16</div>
<div class="t " style="left:1.83px;top:552.74px;font-size:12px;line-height:12px;color:#333;">17</div>
<div class="t " style="left:1.83px;top:572.74px;font-size:12px;line-height:12px;color:#333;">18</div>
<div class="t " style="left:1.83px;top:592.74px;font-size:12px;line-height:12px;color:#333;">19</div>
<div class="t " style="left:2.13px;top:612.74px;font-size:12px;line-height:12px;color:#333;">20</div>
<div class="t " style="left:2.13px;top:632.74px;font-size:12px;line-height:12px;color:#333;">21</div>
<div class="t " style="left:2.13px;top:652.74px;font-size:12px;line-height:12px;color:#333;">22</div>
<div class="t " style="left:2.13px;top:672.74px;font-size:12px;line-height:12px;color:#333;">23</div>
<div class="t " style="left:2.13px;top:692.74px;font-size:12px;line-height:12px;color:#333;">24</div>
<div style="position:absolute;left:377px;top:246px;width:731px;height:123px;border:2px solid #1e6940;box-sizing:border-box"></div>
<div style="position:absolute;left:1103px;top:364px;width:5px;height:5px;background:#1e6940;border:1px solid #fff"></div>
<div class="t " style="left:24.18px;top:231.50px;font-size:13px;line-height:13px;color:#000;font-weight:bold;letter-spacing:0.011px;">Aufgaben</div>
<div class="t " style="left:140.71px;top:231.50px;font-size:13px;line-height:13px;color:#000;font-weight:bold;letter-spacing:0.059px;">Startdatum</div>
<div class="t " style="left:220.56px;top:231.50px;font-size:13px;line-height:13px;color:#000;font-weight:bold;letter-spacing:0.146px;">Dauer</div>
<div class="t " style="left:300.75px;top:231.50px;font-size:13px;line-height:13px;color:#000;font-weight:bold;letter-spacing:-0.035px;">Enddatum</div>
<div class="t " style="left:23.46px;top:252.10px;font-size:13px;line-height:13px;color:#000;letter-spacing:0.366px;">Bedarfsanalyse</div>
<div class="t " style="left:151.98px;top:252.10px;font-size:13px;line-height:13px;color:#000;letter-spacing:-0.143px;">01.03.2020</div>
<div class="t " style="left:220.43px;top:252.10px;font-size:13px;line-height:13px;color:#000;letter-spacing:0.439px;">1 Woche</div>
<div class="t " style="left:311.98px;top:252.10px;font-size:13px;line-height:13px;color:#000;letter-spacing:-0.154px;">07.03.2020</div>
<div class="t " style="left:23.46px;top:272.10px;font-size:13px;line-height:13px;color:#000;letter-spacing:0.928px;">Entwurf</div>
<div class="t " style="left:151.98px;top:272.10px;font-size:13px;line-height:13px;color:#000;letter-spacing:-0.143px;">08.03.2020</div>
<div class="t " style="left:220.43px;top:272.10px;font-size:13px;line-height:13px;color:#000;letter-spacing:0.439px;">1 Woche</div>
<div class="t " style="left:311.52px;top:272.10px;font-size:13px;line-height:13px;color:#000;letter-spacing:-0.104px;">14.03.2020</div>
<div class="t " style="left:23.33px;top:292.10px;font-size:13px;line-height:13px;color:#000;letter-spacing:0.966px;">Implementierung</div>
<div class="t " style="left:151.53px;top:292.10px;font-size:13px;line-height:13px;color:#000;letter-spacing:-0.093px;">15.03.2020</div>
<div class="t " style="left:220.43px;top:292.10px;font-size:13px;line-height:13px;color:#000;letter-spacing:0.439px;">1 Woche</div>
<div class="t " style="left:311.85px;top:292.10px;font-size:13px;line-height:13px;color:#000;letter-spacing:-0.140px;">21.03.2020</div>
<div class="t " style="left:23.46px;top:312.10px;font-size:13px;line-height:13px;color:#000;letter-spacing:0.893px;">Kontrolle</div>
<div class="t " style="left:151.85px;top:312.10px;font-size:13px;line-height:13px;color:#000;letter-spacing:-0.129px;">22.03.2020</div>
<div class="t " style="left:220.88px;top:312.10px;font-size:13px;line-height:13px;color:#000;letter-spacing:-0.040px;">3 Tage</div>
<div class="t " style="left:311.85px;top:312.10px;font-size:13px;line-height:13px;color:#000;letter-spacing:-0.140px;">24.03.2020</div>
<div class="t " style="left:24.43px;top:332.10px;font-size:13px;line-height:13px;color:#000;letter-spacing:0.732px;">Wartung</div>
<div class="t " style="left:151.85px;top:332.10px;font-size:13px;line-height:13px;color:#000;letter-spacing:-0.129px;">25.03.2020</div>
<div class="t " style="left:220.75px;top:332.10px;font-size:13px;line-height:13px;color:#000;letter-spacing:-0.014px;">2 Tage</div>
<div class="t " style="left:311.85px;top:332.10px;font-size:13px;line-height:13px;color:#000;letter-spacing:-0.140px;">26.03.2020</div>
<div class="t " style="left:23.46px;top:352.10px;font-size:13px;line-height:13px;color:#000;letter-spacing:0.491px;">Freigabe</div>
<div class="t " style="left:151.85px;top:352.10px;font-size:13px;line-height:13px;color:#000;letter-spacing:-0.129px;">27.03.2020</div>
<div class="t " style="left:220.75px;top:352.10px;font-size:13px;line-height:13px;color:#000;letter-spacing:-0.014px;">2 Tage</div>
<div class="t " style="left:311.85px;top:352.10px;font-size:13px;line-height:13px;color:#000;letter-spacing:-0.140px;">28.03.2020</div>
<div class="t" style="left:386.30px;top:243.2px;font-size:13px;line-height:13px;color:#000;letter-spacing:0.2px;transform-origin:0 0;transform:rotate(-90deg)">1. Mrz.</div>
<div class="t" style="left:412.30px;top:243.2px;font-size:13px;line-height:13px;color:#000;letter-spacing:0.2px;transform-origin:0 0;transform:rotate(-90deg)">2. Mrz.</div>
<div class="t" style="left:438.30px;top:243.2px;font-size:13px;line-height:13px;color:#000;letter-spacing:0.2px;transform-origin:0 0;transform:rotate(-90deg)">3. Mrz.</div>
<div class="t" style="left:464.30px;top:243.2px;font-size:13px;line-height:13px;color:#000;letter-spacing:0.2px;transform-origin:0 0;transform:rotate(-90deg)">4. Mrz.</div>
<div class="t" style="left:490.30px;top:243.2px;font-size:13px;line-height:13px;color:#000;letter-spacing:0.2px;transform-origin:0 0;transform:rotate(-90deg)">5. Mrz.</div>
<div class="t" style="left:516.30px;top:243.2px;font-size:13px;line-height:13px;color:#000;letter-spacing:0.2px;transform-origin:0 0;transform:rotate(-90deg)">6. Mrz.</div>
<div class="t" style="left:542.30px;top:243.2px;font-size:13px;line-height:13px;color:#000;letter-spacing:0.2px;transform-origin:0 0;transform:rotate(-90deg)">7. Mrz.</div>
<div class="t" style="left:568.30px;top:243.2px;font-size:13px;line-height:13px;color:#000;letter-spacing:0.2px;transform-origin:0 0;transform:rotate(-90deg)">8. Mrz.</div>
<div class="t" style="left:594.30px;top:243.2px;font-size:13px;line-height:13px;color:#000;letter-spacing:0.2px;transform-origin:0 0;transform:rotate(-90deg)">9. Mrz.</div>
<div class="t" style="left:620.30px;top:243.2px;font-size:13px;line-height:13px;color:#000;letter-spacing:0.2px;transform-origin:0 0;transform:rotate(-90deg)">10. Mrz.</div>
<div class="t" style="left:646.30px;top:243.2px;font-size:13px;line-height:13px;color:#000;letter-spacing:0.2px;transform-origin:0 0;transform:rotate(-90deg)">11. Mrz.</div>
<div class="t" style="left:672.30px;top:243.2px;font-size:13px;line-height:13px;color:#000;letter-spacing:0.2px;transform-origin:0 0;transform:rotate(-90deg)">12. Mrz.</div>
<div class="t" style="left:698.30px;top:243.2px;font-size:13px;line-height:13px;color:#000;letter-spacing:0.2px;transform-origin:0 0;transform:rotate(-90deg)">13. Mrz.</div>
<div class="t" style="left:724.30px;top:243.2px;font-size:13px;line-height:13px;color:#000;letter-spacing:0.2px;transform-origin:0 0;transform:rotate(-90deg)">14. Mrz.</div>
<div class="t" style="left:750.30px;top:243.2px;font-size:13px;line-height:13px;color:#000;letter-spacing:0.2px;transform-origin:0 0;transform:rotate(-90deg)">15. Mrz.</div>
<div class="t" style="left:776.30px;top:243.2px;font-size:13px;line-height:13px;color:#000;letter-spacing:0.2px;transform-origin:0 0;transform:rotate(-90deg)">16. Mrz.</div>
<div class="t" style="left:802.30px;top:243.2px;font-size:13px;line-height:13px;color:#000;letter-spacing:0.2px;transform-origin:0 0;transform:rotate(-90deg)">17. Mrz.</div>
<div class="t" style="left:828.30px;top:243.2px;font-size:13px;line-height:13px;color:#000;letter-spacing:0.2px;transform-origin:0 0;transform:rotate(-90deg)">18. Mrz.</div>
<div class="t" style="left:854.30px;top:243.2px;font-size:13px;line-height:13px;color:#000;letter-spacing:0.2px;transform-origin:0 0;transform:rotate(-90deg)">19. Mrz.</div>
<div class="t" style="left:880.30px;top:243.2px;font-size:13px;line-height:13px;color:#000;letter-spacing:0.2px;transform-origin:0 0;transform:rotate(-90deg)">20. Mrz.</div>
<div class="t" style="left:906.30px;top:243.2px;font-size:13px;line-height:13px;color:#000;letter-spacing:0.2px;transform-origin:0 0;transform:rotate(-90deg)">21. Mrz.</div>
<div class="t" style="left:932.30px;top:243.2px;font-size:13px;line-height:13px;color:#000;letter-spacing:0.2px;transform-origin:0 0;transform:rotate(-90deg)">22. Mrz.</div>
<div class="t" style="left:958.30px;top:243.2px;font-size:13px;line-height:13px;color:#000;letter-spacing:0.2px;transform-origin:0 0;transform:rotate(-90deg)">23. Mrz.</div>
<div class="t" style="left:984.30px;top:243.2px;font-size:13px;line-height:13px;color:#000;letter-spacing:0.2px;transform-origin:0 0;transform:rotate(-90deg)">24. Mrz.</div>
<div class="t" style="left:1010.30px;top:243.2px;font-size:13px;line-height:13px;color:#000;letter-spacing:0.2px;transform-origin:0 0;transform:rotate(-90deg)">25. Mrz.</div>
<div class="t" style="left:1036.30px;top:243.2px;font-size:13px;line-height:13px;color:#000;letter-spacing:0.2px;transform-origin:0 0;transform:rotate(-90deg)">26. Mrz.</div>
<div class="t" style="left:1062.30px;top:243.2px;font-size:13px;line-height:13px;color:#000;letter-spacing:0.2px;transform-origin:0 0;transform:rotate(-90deg)">27. Mrz.</div>
<div class="t" style="left:1088.30px;top:243.2px;font-size:13px;line-height:13px;color:#000;letter-spacing:0.2px;transform-origin:0 0;transform:rotate(-90deg)">28. Mrz.</div>
<svg style="position:absolute;left:0;top:130px;overflow:visible" width="300" height="40"><g transform="translate(0,-130)"><polygon points="89,147.3 96.2,147.3 92.6,151" fill="#707070"/><rect x="117" y="144.8" width="2" height="2" fill="#a0a0a0"/><rect x="117" y="148.9" width="2" height="2" fill="#a0a0a0"/><rect x="117" y="152.9" width="2" height="2" fill="#a0a0a0"/><path d="M147,146.3 L157,154.5 M157,146.3 L147,154.5" stroke="#c2c2c2" stroke-width="1.5"/><path d="M182,150.5 L186.5,155 L195.2,146" fill="none" stroke="#c2c2c2" stroke-width="1.6"/><text x="218.2" y="153.5" font-family="Liberation Serif" font-style="italic" font-weight="bold" font-size="13" fill="#555">f</text><text x="223" y="154.6" font-family="Liberation Serif" font-style="italic" font-weight="bold" font-size="10" fill="#555">x</text></g></svg>
<div style="position:absolute;left:450px;top:274px;width:396px;height:366px;background:#f0f0f0;border:1px solid #6e6e6e;box-sizing:border-box;box-shadow:0 1px 16px 1px rgba(0,0,0,0.26)"></div>
<div style="position:absolute;left:451px;top:275px;width:394px;height:30px;background:#fff"></div>
<div class="t " style="left:458.56px;top:284.10px;font-size:11.7px;line-height:11.7px;color:#000;letter-spacing:0.072px;">Neue Formatierungsregel</div>
<div class="t " style="left:774.52px;top:283.84px;font-size:12px;line-height:12px;color:#000;">?</div>
<svg style="position:absolute;left:810px;top:280px" width="24" height="20"><path d="M7,4.2 L17.2,14.2 M17.2,4.2 L7,14.2" stroke="#111" stroke-width="1.1"/></svg>
<div class="t " style="left:457.77px;top:315.88px;font-size:11.6px;line-height:11.6px;color:#000;letter-spacing:-0.010px;">Regeltyp auswählen:</div>
<div style="position:absolute;left:519px;top:327px;width:5px;height:1px;background:#000"></div>
<div style="position:absolute;left:457px;top:331px;width:382px;height:113px;background:#fff;border:2px solid #6d6d6d;box-sizing:border-box"></div>
<div style="position:absolute;left:460px;top:424px;width:376px;height:18px;background:#e5e5e5"></div>
<div style="position:absolute;left:460px;top:351px;width:376px;height:1px;background:#ececec"></div>
<div class="t " style="left:478.20px;top:337.88px;font-size:11.6px;line-height:11.6px;color:#000;letter-spacing:0.047px;">Alle Zellen basierend auf ihren Werten formatieren</div>
<div style="position:absolute;left:460px;top:369px;width:376px;height:1px;background:#ececec"></div>
<div class="t " style="left:477.27px;top:355.88px;font-size:11.6px;line-height:11.6px;color:#000;letter-spacing:0.114px;">Nur Zellen formatieren, die enthalten</div>
<div style="position:absolute;left:460px;top:387px;width:376px;height:1px;background:#ececec"></div>
<div class="t " style="left:477.27px;top:373.88px;font-size:11.6px;line-height:11.6px;color:#000;letter-spacing:0.108px;">Nur obere oder untere Werte formatieren</div>
<div style="position:absolute;left:460px;top:405px;width:376px;height:1px;background:#ececec"></div>
<div class="t " style="left:477.27px;top:391.88px;font-size:11.6px;line-height:11.6px;color:#000;letter-spacing:0.105px;">Nur Werte über oder unter dem Durchschnitt formatieren</div>
<div style="position:absolute;left:460px;top:423px;width:376px;height:1px;background:#ececec"></div>
<div class="t " style="left:477.27px;top:409.88px;font-size:11.6px;line-height:11.6px;color:#000;letter-spacing:0.167px;">Nur eindeutige oder doppelte Werte formatieren</div>
<div class="t " style="left:477.27px;top:427.88px;font-size:11.6px;line-height:11.6px;color:#000;letter-spacing:0.031px;">Formel zur Ermittlung der zu formatierenden Zellen verwenden</div>
<svg style="position:absolute;left:0;top:0" width="1179" height="705"><path d="M467,342.00 h2 v1.3 h3.2 l2.6,1.1 v0.2 l-2.6,0.5 h-3.2 v0.7 h-2 z" fill="#000"/><path d="M467,360.00 h2 v1.3 h3.2 l2.6,1.1 v0.2 l-2.6,0.5 h-3.2 v0.7 h-2 z" fill="#000"/><path d="M467,378.00 h2 v1.3 h3.2 l2.6,1.1 v0.2 l-2.6,0.5 h-3.2 v0.7 h-2 z" fill="#000"/><path d="M467,396.00 h2 v1.3 h3.2 l2.6,1.1 v0.2 l-2.6,0.5 h-3.2 v0.7 h-2 z" fill="#000"/><path d="M467,414.00 h2 v1.3 h3.2 l2.6,1.1 v0.2 l-2.6,0.5 h-3.2 v0.7 h-2 z" fill="#000"/><path d="M467,432.00 h2 v1.3 h3.2 l2.6,1.1 v0.2 l-2.6,0.5 h-3.2 v0.7 h-2 z" fill="#000"/></svg>
<div class="t " style="left:457.77px;top:460.98px;font-size:11.6px;line-height:11.6px;color:#000;letter-spacing:0.064px;">Regelbeschreibung bearbeiten:</div>
<div style="position:absolute;left:465px;top:472px;width:6px;height:1px;background:#000"></div>
<div style="position:absolute;left:457px;top:476px;width:382px;height:130px;background:#fff;border:1px solid #a0a0a0;box-sizing:border-box"></div>
<div class="t " style="left:467.90px;top:485.78px;font-size:11.6px;line-height:11.6px;color:#000;font-weight:bold;letter-spacing:-0.132px;transform-origin:0 0;transform:scaleX(0.9645);">Werte formatieren, für die diese Formel wahr ist:</div>
<div style="position:absolute;left:459px;top:542px;width:378px;height:1px;background:#d6d6d6"></div>
<div style="position:absolute;left:456px;top:495px;width:383px;height:42px;border:8px solid #e81c24;box-sizing:border-box"></div>
<div style="position:absolute;left:466px;top:505px;width:362px;height:21px;background:#fff;border:1px solid #a0a0a0;box-sizing:border-box"></div>
<div class="t " style="left:470.34px;top:510.04px;font-size:12px;line-height:12px;color:#000;transform-origin:0 0;transform:scaleX(0.9250);">=UND(E$1&gt;=$B2;E$1&lt;=$D7)</div>
<div style="position:absolute;left:608px;top:507px;width:1px;height:16px;background:#000"></div>
<div style="position:absolute;left:806px;top:505px;width:22px;height:21px;background:#e1e1e1;border:1px solid #adadad;box-sizing:border-box"></div>
<svg style="position:absolute;left:806px;top:505px" width="22" height="21"><path d="M10.8,6 L6.5,10.3 H9.3 V14 H12.3 V10.3 H15.1 Z" fill="#000"/><rect x="6.3" y="15.3" width="9" height="1.3" fill="#000"/></svg>
<div class="t " style="left:467.24px;top:572.58px;font-size:11.6px;line-height:11.6px;color:#000;font-weight:bold;letter-spacing:-0.215px;transform-origin:0 0;transform:scaleX(0.9533);">Vorschau:</div>
<div style="position:absolute;left:528px;top:559px;width:200px;height:40px;background:#fff;border:1px solid #646464;box-sizing:border-box"></div>
<div class="t " style="left:556.66px;top:572.80px;font-size:13px;line-height:13px;color:#222;letter-spacing:0.492px;">Kein Format festgelegt</div>
<div style="position:absolute;left:738px;top:568px;width:89px;height:21px;background:#e1e1e1;border:1px solid #adadad;box-sizing:border-box"></div>
<div class="t " style="left:746.07px;top:572.88px;font-size:11.6px;line-height:11.6px;color:#000;letter-spacing:0.032px;">Formatieren...</div>
<div style="position:absolute;left:747px;top:584px;width:6px;height:1px;background:#000"></div>
<div style="position:absolute;left:674px;top:610px;width:74px;height:21px;background:#e1e1e1;border:2px solid #0078d7;box-sizing:border-box"></div>
<div class="t " style="left:703.52px;top:614.68px;font-size:11.6px;line-height:11.6px;color:#000;letter-spacing:-0.929px;transform-origin:0 0;transform:scaleX(0.9148);">OK</div>
<div style="position:absolute;left:759px;top:610px;width:74px;height:21px;background:#e1e1e1;border:1px solid #adadad;box-sizing:border-box"></div>
<div class="t " style="left:768.40px;top:614.68px;font-size:11.6px;line-height:11.6px;color:#000;letter-spacing:-0.041px;">Abbrechen</div>
</div></body></html>
